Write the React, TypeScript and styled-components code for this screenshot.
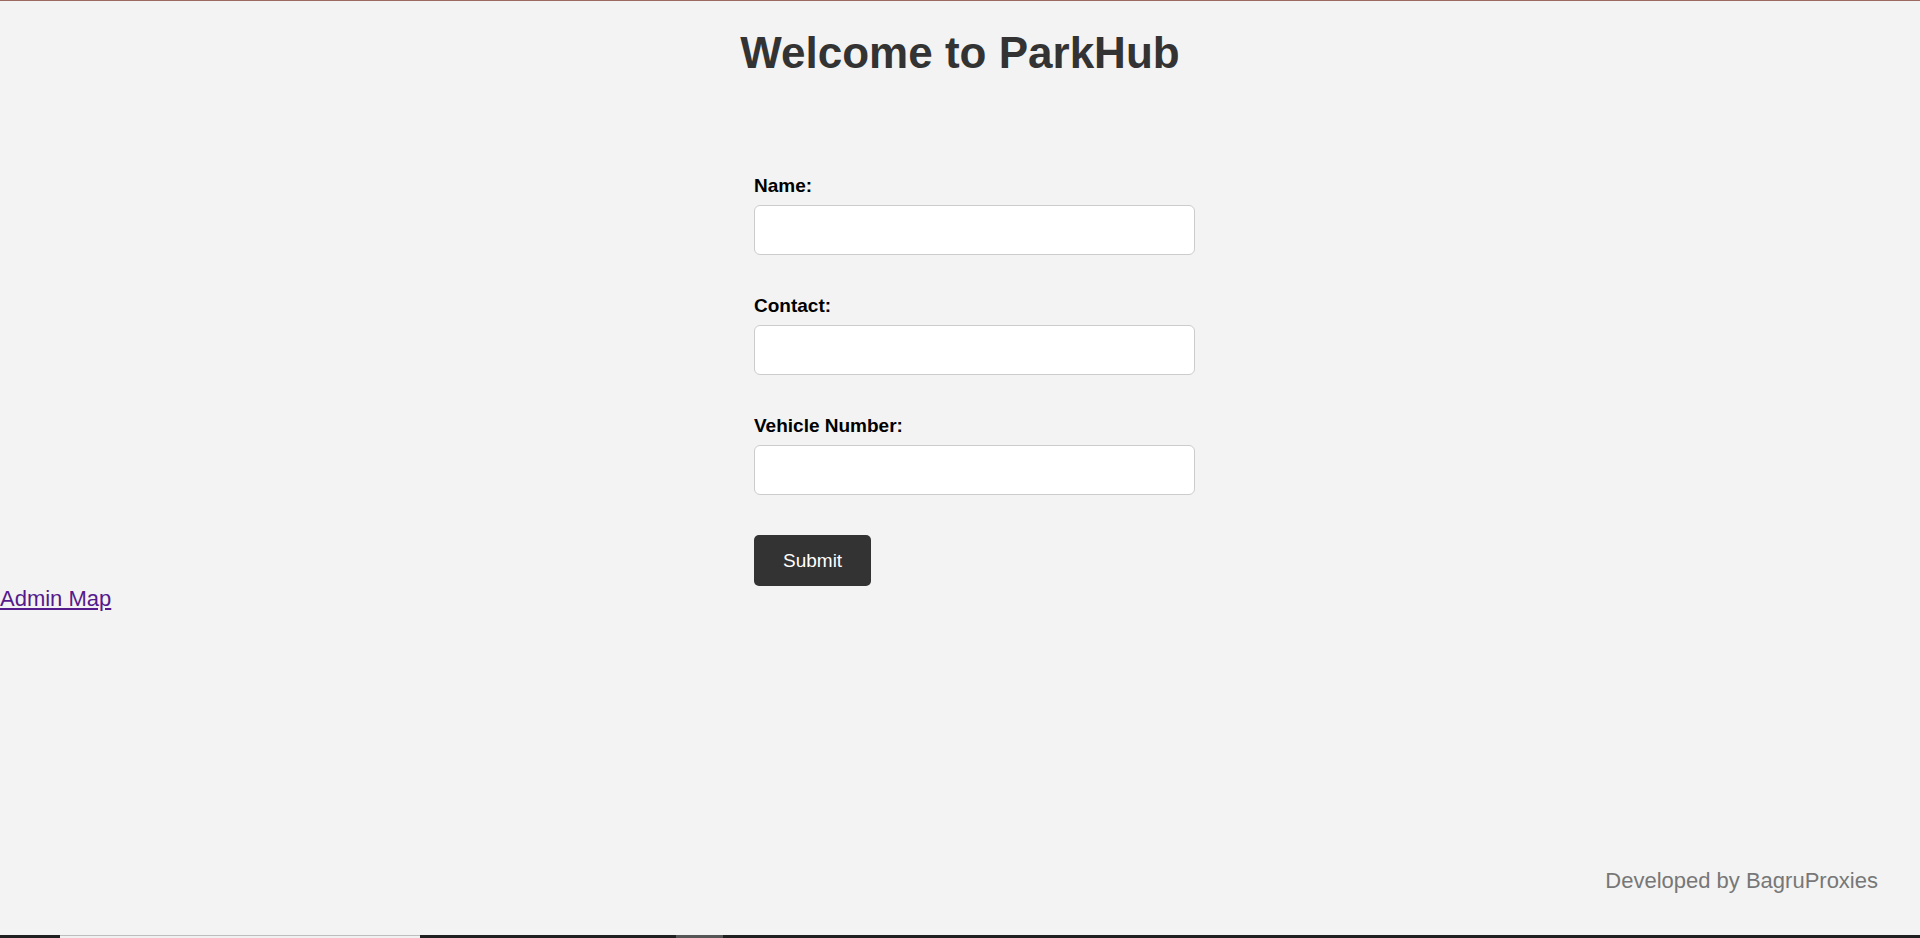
import React from "react";
import styled, { createGlobalStyle } from "styled-components";

const GlobalStyle = createGlobalStyle`
  html, body {
    margin: 0;
    padding: 0;
    background: #f3f3f3;
  }
  * { box-sizing: border-box; }
`;

const Page = styled.div`
  min-height: 100vh;
  display: flex;
  flex-direction: column;
  border-top: 1px solid #9c6a61;
  background: #f3f3f3;
  font-family: "Liberation Sans", Arial, Helvetica, sans-serif;
`;

const Title = styled.h1`
  margin: 27px 0 0;
  text-align: center;
  font-size: 44px;
  line-height: 50px;
  font-weight: 700;
  color: #333333;
`;

const Form = styled.form`
  width: 470px;
  margin: 97px auto 0;
  padding-left: 29px;
  display: flex;
  flex-direction: column;
  align-items: flex-start;
`;

const Field = styled.div`
  width: 100%;
  display: flex;
  flex-direction: column;
  margin-bottom: 40px;
`;

const Label = styled.label`
  font-size: 19px;
  line-height: 22px;
  font-weight: 700;
  color: #000000;
  margin-bottom: 8px;
`;

const Input = styled.input`
  width: 100%;
  height: 50px;
  border: 1px solid #cccccc;
  border-radius: 6px;
  background: #ffffff;
  padding: 0 12px;
  font-family: inherit;
  font-size: 17px;
  outline: none;
`;

const SubmitButton = styled.button`
  height: 51px;
  padding: 0 29px;
  border: none;
  border-radius: 5px;
  background: #333333;
  color: #ffffff;
  font-family: inherit;
  font-size: 19px;
  cursor: pointer;
`;

const AdminLink = styled.a`
  align-self: flex-start;
  font-size: 22px;
  line-height: 25px;
  color: #551a8b;
  text-decoration: underline;
`;

const Footer = styled.footer`
  margin-top: auto;
  align-self: flex-end;
  padding: 0 42px 42px 0;
  font-size: 22px;
  line-height: 25px;
  color: #777777;
`;

const Strip = styled.div`
  height: 3px;
  display: flex;
  background: #202020;
`;

const StripSegment = styled.div<{ $w: number; $tone: "dark" | "light" | "mid" }>`
  width: ${(p) => p.$w}px;
  flex: none;
  background: ${(p) =>
    p.$tone === "light" ? "#f0f0f0" : p.$tone === "mid" ? "#555555" : "#202020"};
  border-top: ${(p) => (p.$tone === "light" ? "1px solid #bdbdbd" : "none")};
`;

export default function App() {
  return (
    <>
      <GlobalStyle />
      <Page>
        <Title>Welcome to ParkHub</Title>
        <Form onSubmit={(e) => e.preventDefault()}>
          <Field>
            <Label htmlFor="name">Name:</Label>
            <Input id="name" type="text" />
          </Field>
          <Field>
            <Label htmlFor="contact">Contact:</Label>
            <Input id="contact" type="text" />
          </Field>
          <Field>
            <Label htmlFor="vehicle">Vehicle Number:</Label>
            <Input id="vehicle" type="text" />
          </Field>
          <SubmitButton type="submit">Submit</SubmitButton>
        </Form>
        <AdminLink href="#admin">Admin Map</AdminLink>
        <Footer>Developed by BagruProxies</Footer>
        <Strip>
          <StripSegment $w={60} $tone="dark" />
          <StripSegment $w={360} $tone="light" />
          <StripSegment $w={256} $tone="dark" />
          <StripSegment $w={47} $tone="mid" />
        </Strip>
      </Page>
    </>
  );
}
